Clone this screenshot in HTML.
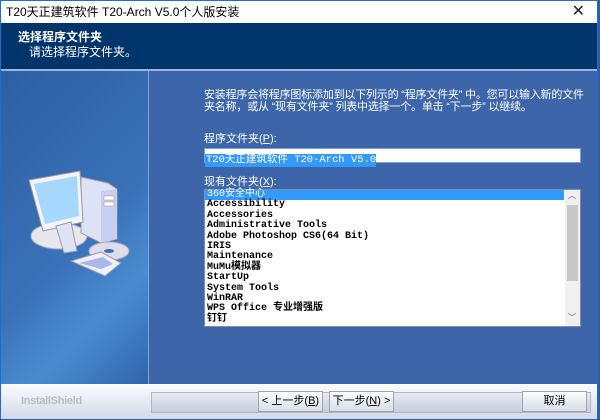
<!DOCTYPE html>
<html><head><meta charset="utf-8"><style>
*{margin:0;padding:0;box-sizing:border-box}
body{width:600px;height:420px;overflow:hidden;background:#2a5ea8;font-family:"Liberation Sans","Noto Sans CJK SC",sans-serif;position:relative}
.win{position:absolute;left:0;top:0;width:598px;height:419px;border:1px solid #1f6fc6;background:#3d65a9}
.title{position:absolute;left:0;top:0;width:596px;height:22px;background:#fff;font-size:12px;color:#000;line-height:22px;padding-left:5px}
.close{position:absolute;right:12px;top:0;font-size:16px;color:#222}
.hdr{position:absolute;left:0;top:22px;width:596px;height:46px;background:#00356b}
.hdr .a{position:absolute;left:17px;top:5px;color:#fff;font-weight:bold;font-size:12px}
.hdr .b{position:absolute;left:28px;top:20px;color:#fff;font-size:12px}
.line{position:absolute;left:0;top:68px;width:596px;height:2px;background:#9fb6d8}
.left{position:absolute;left:0;top:70px;width:148px;height:313px;background:linear-gradient(135deg,#2d5fa3 0%,#3a72b8 55%,#4a8cd0 75%,#2f64aa 100%);border-right:1px solid #7ea4d8}
.t{position:absolute;color:#fff;font-size:11px;white-space:nowrap}
.box{position:absolute;left:203px;top:147px;width:377px;height:15px;background:#fff;border:1px solid #7fa0d0}
.box span{background:#3399ff;color:#fff;font-family:"Liberation Mono","Noto Sans CJK SC",monospace;font-size:10.5px;line-height:13px;display:inline-block;padding-left:1px}
.list{position:absolute;left:203px;top:188px;width:377px;height:138px;background:#fff;border:1px solid #7f8fa8;font-family:"Liberation Mono","Noto Sans CJK SC",monospace;font-size:10px;font-weight:bold;color:#000}
.it{height:10.4px;line-height:10.4px;padding-left:2px;white-space:nowrap;width:359px}
.list .sel{background:#3399ff;color:#fff;font-weight:normal}
.sb{position:absolute;right:0;top:0;width:15px;height:136px;background:#f0f0f0}
.thumb{position:absolute;left:2px;top:15px;width:11px;height:76px;background:#c8c8c8}
.sb .u,.sb .d{position:absolute;left:3px;font-size:8px;color:#555;font-weight:normal;line-height:10px}
.bot{position:absolute;left:0;top:383px;width:596px;height:35px;background:linear-gradient(#fafbff,#d4d8e6);border-top:1px solid #fff}
.is{position:absolute;left:20px;top:10px;color:#b8bccb;font-size:11px;font-weight:bold;letter-spacing:-.3px}
.panel{position:absolute;left:150px;top:7px;width:440px;height:21px;background:linear-gradient(#e8eaf2,#c8ccda);border:1px solid #b0b4c4}
.btn{position:absolute;top:6px;height:21px;background:linear-gradient(#fdfdff,#d9dce8);border:1px solid #9ea3b4;font-size:11px;line-height:19px;text-align:center;color:#000;white-space:nowrap}
</style></head><body>
<div class="win">
<div class="title">T20天正建筑软件 T20-Arch V5.0个人版安装<span class="close">✕</span></div>
<div class="hdr"><div class="a">选择程序文件夹</div><div class="b">请选择程序文件夹。</div></div>
<div class="line"></div>
<div class="left">
<svg width="148" height="313" viewBox="0 70 148 313">
<ellipse cx="58" cy="235" rx="28" ry="13" fill="#e6e8ee" stroke="#aab" />
<polygon points="80,176 107,182 116,188 116,238 100,242 80,232" fill="#dde2f4" stroke="#99a"/>
<polygon points="100,190 116,188 116,238 100,242" fill="#c8cfee"/>
<rect x="103" y="195" width="10" height="4" fill="#fff" stroke="#99a" stroke-width=".5"/>
<rect x="103" y="201" width="10" height="4" fill="#fff" stroke="#99a" stroke-width=".5"/>
<polygon points="28,179 79,170 82,221 42,230" fill="#f4f4f6" stroke="#999"/>
<polygon points="33,183 76,175 78,215 44,223" fill="#a6d8ff"/>
<polygon points="55,225 70,221 76,250 63,252" fill="#dfe3f4" stroke="#99a"/>
<ellipse cx="108" cy="250" rx="20" ry="9" fill="#dde" stroke="#aab"/>
<ellipse cx="108" cy="250" rx="5" ry="2" fill="#3a70b5"/>
<polygon points="70,260 100,251 120,262 104,275" fill="#f0f0f4" stroke="#99a"/>
<polygon points="78,262 102,256 112,263 100,268" fill="#a8b8e8"/>
</svg>
</div>
<div class="t" style="left:203px;top:88px;line-height:12px;letter-spacing:-0.2px">安装程序会将程序图标添加到以下列示的 “程序文件夹” 中。您可以输入新的文件<br>夹名称，或从 “现有文件夹” 列表中选择一个。单击 “下一步” 以继续。</div>
<div class="t" style="left:203px;top:129px">程序文件夹(<u>P</u>):</div>
<div class="box"><span>T20天正建筑软件 T20-Arch V5.0</span></div>
<div class="t" style="left:203px;top:172px">现有文件夹(<u>X</u>):</div>
<div class="list">
<div class="it sel">360安全中心</div><div class="it">Accessibility</div><div class="it">Accessories</div><div class="it">Administrative Tools</div><div class="it">Adobe Photoshop CS6(64 Bit)</div><div class="it">IRIS</div><div class="it">Maintenance</div><div class="it">MuMu模拟器</div><div class="it">StartUp</div><div class="it">System Tools</div><div class="it">WinRAR</div><div class="it">WPS Office 专业增强版</div><div class="it">钉钉</div>
<div class="sb"><span class="u" style="top:2px">︿</span><div class="thumb"></div><span class="d" style="bottom:2px">﹀</span></div>
</div>
<div class="bot">
<div class="is">InstallShield</div>
<div class="panel"></div>
<div class="btn" style="left:257px;width:65px">&lt; 上一步(<u>B</u>)</div>
<div class="btn" style="left:328px;width:65px">下一步(<u>N</u>) &gt;</div>
<div class="btn" style="left:521px;width:65px">取消</div>
</div>
</div>
</body></html>
